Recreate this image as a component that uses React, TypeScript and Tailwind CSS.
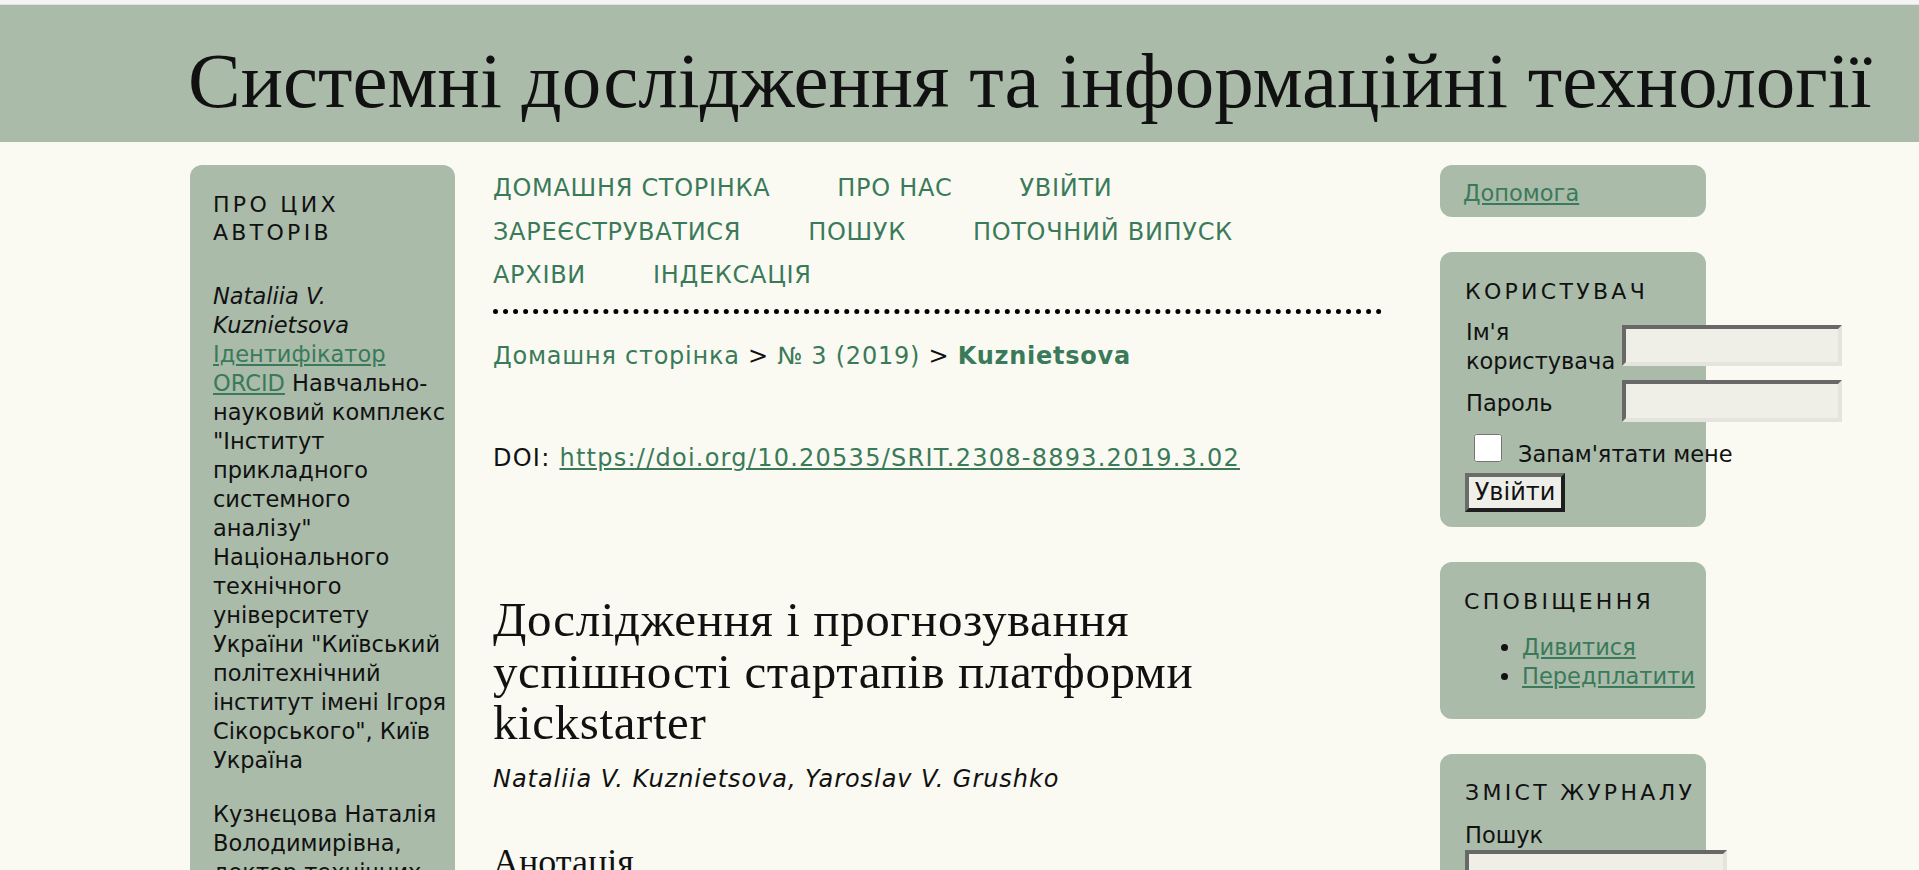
import React from 'react';

const navItems = [
  'Домашня сторінка',
  'Про нас',
  'Увійти',
  'Зареєструватися',
  'Пошук',
  'Поточний випуск',
  'Архіви',
  'Індексація',
];

const affiliation = [
  'науковий комплекс',
  '"Інститут',
  'прикладного',
  'системного',
  'аналізу"',
  'Національного',
  'технічного',
  'університету',
  'України "Київський',
  'політехнічний',
  'інститут імені Ігоря',
  'Сікорського", Київ',
  'Україна',
];

const abstractParas = [
  'Розглянуто задачу прогнозування успішності стартапів краудфандингової платформи Kickstarter. Проаналізовано дані про проекти, що були розміщені на платформі, виконано їх попередню обробку та відбір найбільш інформативних ознак.',
  'Побудовано моделі на основі логістичної регресії, дерев рішень, випадкового лісу та градієнтного бустингу. Проведено порівняння якості отриманих моделей за низкою критеріїв, зокрема за точністю, повнотою та площею під ROC-кривою.',
  'Показано, що найкращі результати прогнозування досягаються при використанні ансамблевих методів. Запропоновані підходи можуть бути використані авторами проектів для оцінювання шансів на успіх ще до початку кампанії.',
];

const sideBox = 'rounded-[12px] bg-[#aabbaa] text-[22.5px] leading-[29px]';
const boxTitle = 'text-[22px] leading-[28px] tracking-[3.3px] uppercase font-normal text-[#111]';
const inset =
  'border-4 border-t-[#686868] border-l-[#686868] border-b-[#e4e4dc] border-r-[#e4e4dc] bg-[#efefe8] outline-none';

export default function App() {
  return (
    <div className="h-screen overflow-y-scroll bg-[#fafaf2] font-['DejaVu_Sans',Verdana,sans-serif] text-[24px] leading-[29px] text-[#111] [&::-webkit-scrollbar]:w-[22px] [&::-webkit-scrollbar-track]:bg-[#f1f1f1] [&::-webkit-scrollbar-thumb]:border-[4px] [&::-webkit-scrollbar-thumb]:border-solid [&::-webkit-scrollbar-thumb]:border-[#f1f1f1] [&::-webkit-scrollbar-thumb]:bg-[#c1c1c1]">
      <div className="h-[5px] border-b border-[#e2e2e2] bg-[#f4f4f4]" />
      <header className="bg-[#aabbaa] pb-[21px] pl-[188px] pt-[36px]">
        <h1 className="whitespace-nowrap font-['Liberation_Serif',serif] text-[79px] leading-[80px] font-normal text-[#111]">
          Системні дослідження та інформаційні технології
        </h1>
      </header>

      <div className="flex items-start pl-[190px] pt-[23px]">
        {/* left column */}
        <aside className={`${sideBox} w-[265px] shrink-0 pb-[60px] pl-[23px] pr-[4px] pt-[26px]`}>
          <h3 className={`${boxTitle} mb-[35px]`}>Про цих авторів</h3>
          <p className="whitespace-nowrap">
            <em>
              Nataliia V.
              <br />
              Kuznietsova
            </em>
            <br />
            <a href="#" className="text-[#3a7a5a] underline">
              Ідентифікатор
              <br />
              ORCID
            </a>{' '}
            Навчально-
            {affiliation.map((line) => (
              <React.Fragment key={line}>
                <br />
                {line}
              </React.Fragment>
            ))}
          </p>
          <p className="mt-[25px] whitespace-nowrap">
            Кузнєцова Наталія
            <br />
            Володимирівна,
            <br />
            доктор технічних
            <br />
            наук, доцент
          </p>
        </aside>

        {/* main column */}
        <main className="ml-[38px] w-[889px] shrink-0 pb-[200px] pt-[9px]">
          <nav className="border-b-[5px] border-dotted border-black pb-[19px]">
            <ul className="flex flex-wrap gap-x-[67px] gap-y-[14.5px]">
              {navItems.map((item) => (
                <li key={item}>
                  <a href="#" className="uppercase tracking-[0.7px] text-[#3a7a5a]">
                    {item}
                  </a>
                </li>
              ))}
            </ul>
          </nav>

          <div className="mt-[28px] tracking-[0.75px]">
            <a href="#" className="text-[#3a7a5a]">
              Домашня сторінка
            </a>{' '}
            &gt;{' '}
            <a href="#" className="text-[#3a7a5a]">
              № 3 (2019)
            </a>{' '}
            &gt;{' '}
            <a href="#" className="font-bold text-[#3a7a5a]">
              Kuznietsova
            </a>
          </div>

          <p className="mt-[73px] tracking-[1.25px]">
            DOI:{' '}
            <a href="#" className="text-[#3a7a5a] underline">
              https://doi.org/10.20535/SRIT.2308-8893.2019.3.02
            </a>
          </p>

          <h2 className="mt-[121px] font-['Liberation_Serif',serif] text-[49px] leading-[51.5px] tracking-[0.6px] font-normal text-[#111]">
            Дослідження і прогнозування
            <br />
            успішності стартапів платформи
            <br />
            kickstarter
          </h2>
          <p className="mt-[16px] italic tracking-[0.95px]">Nataliia V. Kuznietsova, Yaroslav V. Grushko</p>

          <h3 className="mt-[48px] font-['Liberation_Serif',serif] text-[36px] leading-[40px] font-normal">Анотація</h3>
          {abstractParas.map((para) => (
            <p key={para} className="mt-[16px]">
              {para}
            </p>
          ))}
        </main>

        {/* right column */}
        <aside className="ml-[58px] flex w-[266px] shrink-0 flex-col gap-[35px]">
          <div className={`${sideBox} pb-[9px] pl-[23px] pt-[14px]`}>
            <a href="#" className="text-[#3a7a5a] underline">
              Допомога
            </a>
          </div>

          <div className={`${sideBox} pb-[15px] pl-[25px] pt-[26px]`}>
            <h3 className={boxTitle}>Користувач</h3>
            <div className="mt-[8px] grid grid-cols-[151px_220px] items-center gap-x-[6px] gap-y-[4px]">
              <label className="pl-px pt-[4px]">
                Ім'я
                <br />
                користувача
              </label>
              <input type="text" className={`${inset} h-[41px] w-[220px]`} />
              <label className="pl-px pt-[4px]">Пароль</label>
              <input type="password" className={`${inset} h-[42px] w-[220px]`} />
            </div>
            <label className="mt-[12px] block whitespace-nowrap">
              <input type="checkbox" className="ml-[9px] mr-[16px] h-[28px] w-[28px] align-baseline" />
              Запам'ятати мене
            </label>
            <button
              type="button"
              className="mt-[4px] h-[39px] w-[100px] border-4 border-t-[#6b6b6b] border-l-[#6b6b6b] border-b-[#1e1e1e] border-r-[#1e1e1e] bg-[#efefe9] text-[24px] leading-[29px] text-[#111]"
            >
              Увійти
            </button>
          </div>

          <div className={`${sideBox} pb-[28px] pl-[24px] pt-[26px]`}>
            <h3 className={boxTitle}>Сповіщення</h3>
            <ul className="mt-[17px] list-disc pl-[58px]">
              <li>
                <a href="#" className="text-[#3a7a5a] underline">
                  Дивитися
                </a>
              </li>
              <li>
                <a href="#" className="text-[#3a7a5a] underline">
                  Передплатити
                </a>
              </li>
            </ul>
          </div>

          <div className={`${sideBox} pb-[40px] pl-[25px] pt-[25px]`}>
            <h3 className={boxTitle}>Зміст журналу</h3>
            <label className="mt-[14px] block">Пошук</label>
            <input type="text" className={`${inset} block h-[41px] w-[262px]`} />
            <p className="mt-[10px]">Пошук в межах</p>
          </div>
        </aside>
      </div>
    </div>
  );
}
